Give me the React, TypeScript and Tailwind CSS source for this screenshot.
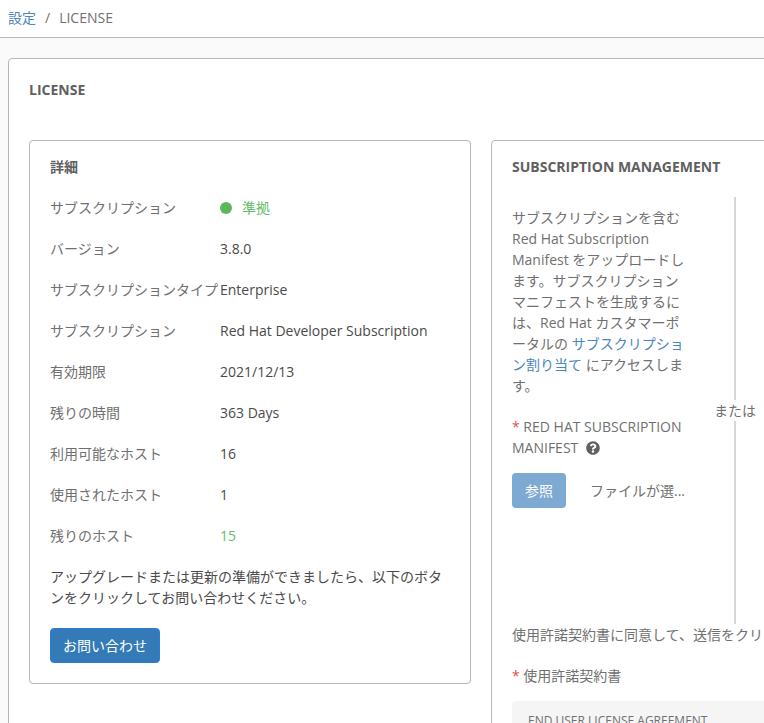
import { FaQuestionCircle } from "react-icons/fa";

const rows: { label: string; value: string; tone?: string }[] = [
  { label: "バージョン", value: "3.8.0" },
  { label: "サブスクリプションタイプ", value: "Enterprise" },
  { label: "サブスクリプション", value: "Red Hat Developer Subscription" },
  { label: "有効期限", value: "2021/12/13" },
  { label: "残りの時間", value: "363 Days" },
  { label: "利用可能なホスト", value: "16" },
  { label: "使用されたホスト", value: "1" },
  { label: "残りのホスト", value: "15", tone: "text-[#66bb6a]" },
];

function DetailRow({ label, value, tone }: { label: string; value: string; tone?: string }) {
  return (
    <div className="mt-5 flex h-[21px] items-center">
      <div className="w-[170px] shrink-0 whitespace-nowrap text-[#707070]">{label}</div>
      <div className={tone ?? "text-[#4a4a4a]"}>{value}</div>
    </div>
  );
}

export default function App() {
  return (
    <div className="h-screen overflow-hidden bg-[#fafafa] text-sm leading-[21px] text-[#707070] [font-family:'Open_Sans','Noto_Sans_CJK_JP',sans-serif]">
      {/* Breadcrumb */}
      <div className="flex h-[38px] items-center gap-[9px] border-b border-[#b7b7b7] bg-white pb-[3px] pl-2">
        <span className="text-[#4a86bd]">設定</span>
        <span>/</span>
        <span>LICENSE</span>
      </div>

      <div className="px-2 pt-5">
        <div className="w-[1000px] rounded border border-[#b7b7b7] bg-white px-5 pt-5 pb-10">
          <div className="font-bold text-[#606060]">LICENSE</div>

          <div className="mt-10 flex items-start gap-5">
            {/* Details */}
            <div className="w-[442px] shrink-0 rounded border border-[#b7b7b7] bg-white px-5 pt-[15px] pb-5">
              <div className="font-bold text-[#606060]">詳細</div>
              <div className="mt-5 flex h-[21px] items-center">
                <div className="w-[170px] shrink-0 text-[#707070]">サブスクリプション</div>
                <span className="mr-[10px] h-3 w-3 rounded-full bg-[#5cb85c]" />
                <span className="text-[#66bb6a]">準拠</span>
              </div>
              {rows.map((r) => (
                <DetailRow key={r.label} {...r} />
              ))}
              <p className="mt-5 text-[#4a4a4a]">
                アップグレードまたは更新の準備ができましたら、以下のボタンをクリックしてお問い合わせください。
              </p>
              <button className="mt-5 h-[35px] w-[110px] rounded border border-[#2a7ae0] bg-[#337ab7] text-white">
                お問い合わせ
              </button>
            </div>

            {/* Subscription management */}
            <div className="w-[500px] shrink-0 rounded border border-[#b7b7b7] bg-white px-5 pt-[15px] pb-5">
              <div className="font-bold text-[#606060]">SUBSCRIPTION MANAGEMENT</div>
              <div className="mt-5 flex h-[427px]">
                <div className="w-[202px] shrink-0 pt-[10px] pr-[28px]">
                  <p>
                    サブスクリプションを含む Red Hat Subscription Manifest をアップロードします。サブスクリプションマニフェストを生成するには、Red Hat カスタマーポータルの{" "}
                    <span className="text-[#4a86bd]">サブスクリプション割り当て</span> にアクセスします。
                  </p>
                  <div className="mt-5">
                    <span className="text-[#d9534f]">*</span> RED HAT SUBSCRIPTION MANIFEST
                    <FaQuestionCircle className="ml-2 inline-block h-[14px] w-[14px] align-[-2px] text-[#606060]" />
                  </div>
                  <div className="mt-[15px] flex items-center gap-6">
                    <button className="h-[35px] w-[54px] rounded bg-[#7ea9d3] text-white">参照</button>
                    <span className="whitespace-nowrap">ファイルが選...</span>
                  </div>
                </div>
                <div className="flex w-[42px] shrink-0 flex-col items-center">
                  <div className="w-0.5 flex-1 bg-[#d7d7d7]" />
                  <div>または</div>
                  <div className="w-0.5 flex-1 bg-[#d7d7d7]" />
                </div>
              </div>
              <div className="whitespace-nowrap">使用許諾契約書に同意して、送信をクリックしてください。</div>
              <div className="mt-5">
                <span className="text-[#d9534f]">*</span> 使用許諾契約書
              </div>
              <div className="mt-[15px] h-40 rounded bg-[#f5f5f5] px-4 pt-[9px] text-xs leading-[21px]">
                END USER LICENSE AGREEMENT
              </div>
            </div>
          </div>
        </div>
      </div>
    </div>
  );
}
